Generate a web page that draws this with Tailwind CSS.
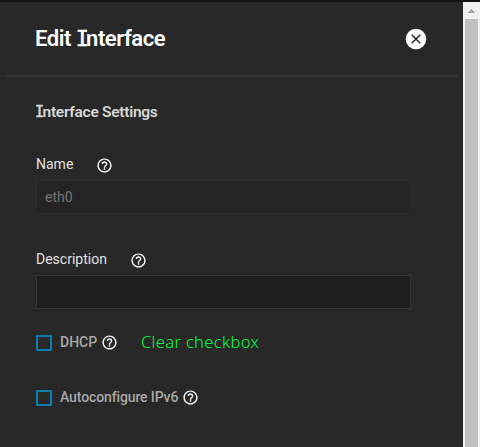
<!DOCTYPE html>
<html lang="en">
<head>
<meta charset="utf-8">
<title>Edit Interface</title>
<script src="https://cdn.jsdelivr.net/npm/@tailwindcss/browser@4"></script>
</head>
<body class="h-[447px] w-[480px] overflow-hidden bg-[#282828] font-['Roboto',sans-serif]">
<svg class="hidden">
  <symbol id="help" viewBox="0 0 24 24"><path d="M11 18h2v-2h-2v2zm1-16C6.480 2 2 6.480 2 12s4.480 10 10 10 10-4.480 10-10S17.520 2 12 2zm0 18c-4.410 0-8-3.590-8-8s3.590-8 8-8 8 3.590 8 8-3.590 8-8 8zm0-14c-2.210 0-4 1.790-4 4h2c0-1.100.9-2 2-2s2 .9 2 2c0 2-3 1.750-3 5h2c0-2.250 3-2.500 3-5 0-2.210-1.790-4-4-4z"/></symbol>
</svg>
<div class="flex h-full flex-col">
  <div class="h-[2px] shrink-0 bg-[#111111]"></div>
  <div class="flex min-h-0 flex-1">
    <main class="w-[463px]">
      <header class="mx-[5px] flex h-[75px] items-center justify-between border-b-2 border-[#333333] pr-[30px] pl-[30px]">
        <h1 class="pt-px text-[22px] leading-[30px] font-semibold tracking-[-0.45px] whitespace-nowrap text-white">Edit <span class="font-['DejaVu_Sans_Mono',monospace] text-[21px] font-normal tracking-[-2.5px] [-webkit-text-stroke:0.6px_white]">I</span>nterface</h1>
        <svg class="h-[24px] w-[24px]" viewBox="0 0 24 24"><circle cx="12" cy="12" r="10.300" fill="#fff"/><path d="M7.700 7.700l8.600 8.600M16.300 7.700l-8.600 8.600" stroke="#282828" stroke-width="1.500"/></svg>
      </header>
      <section class="w-[411px] pt-[25px] pl-[36px]">
        <h2 class="-ml-px h-[20px] text-[15.500px] leading-[20px] font-semibold tracking-[-0.28px] whitespace-nowrap text-[#d8d8d8]"><span class="font-['DejaVu_Sans_Mono',monospace] text-[15px] font-normal tracking-[-1.500px] [-webkit-text-stroke:0.5px_#d8d8d8]">I</span>nterface Settings</h2>
        <div class="mt-[32px] flex h-[20px] items-center text-[14px] text-[#e0e0e0]">
          <label class="w-[60px]">Name</label>
          <svg class="mt-[2px] h-[17px] w-[17px] fill-white"><use href="#help"/></svg>
        </div>
        <div class="mt-[6px] flex h-[34px] items-center border border-[#2d2d2d] bg-[#242424] pl-2 text-[14px] text-[#757575]">eth0</div>
        <div class="mt-[35px] flex h-[20px] items-center text-[14px] text-[#e0e0e0]">
          <label class="w-[94px]">Description</label>
          <svg class="mt-[2px] h-[17px] w-[17px] fill-white"><use href="#help"/></svg>
        </div>
        <div class="mt-[6px] h-[34px] border border-[#363636] bg-[#1e1e1e]"></div>
        <div class="mt-[23px] flex h-[20px] items-center text-[14px] text-[#a9a9a9]">
          <span class="mt-[2px] h-4 w-4 rounded-[1px] border-2 border-[#0c7db1]"></span>
          <span class="ml-2 w-[41px] font-medium">DHCP</span>
          <svg class="mt-px h-[17px] w-[17px] fill-white"><use href="#help"/></svg>
          <span class="ml-[23px] font-['Noto_Sans',sans-serif] text-[16.500px] font-light tracking-[0.34px] whitespace-nowrap text-[#00ff40]">Clear checkbox</span>
        </div>
        <div class="mt-[35px] flex h-[20px] items-center text-[14px] text-[#a9a9a9]">
          <span class="mt-[2px] h-4 w-4 rounded-[1px] border-2 border-[#0c7db1]"></span>
          <span class="ml-2 w-[122px] font-medium tracking-[-0.12px] whitespace-nowrap">Autoconfigure IPv6</span>
          <svg class="mt-px h-[17px] w-[17px] fill-white"><use href="#help"/></svg>
        </div>
      </section>
    </main>
    <aside class="flex w-[17px] flex-col bg-[#f1f1f1] pr-[2px] pl-[2px]">
      <div class="flex h-[17px] shrink-0 justify-center pt-[7px]"><svg class="h-[4px] w-[7px]" viewBox="0 0 7 4" shape-rendering="crispEdges"><path d="M3 0h1v1h1v1h1v1h1v1H0V3h1V2h1V1h1z" fill="#a3a3a3"/></svg></div>
      <div class="flex-1 bg-[#c1c1c1]"></div>
    </aside>
  </div>
</div>
</body>
</html>
